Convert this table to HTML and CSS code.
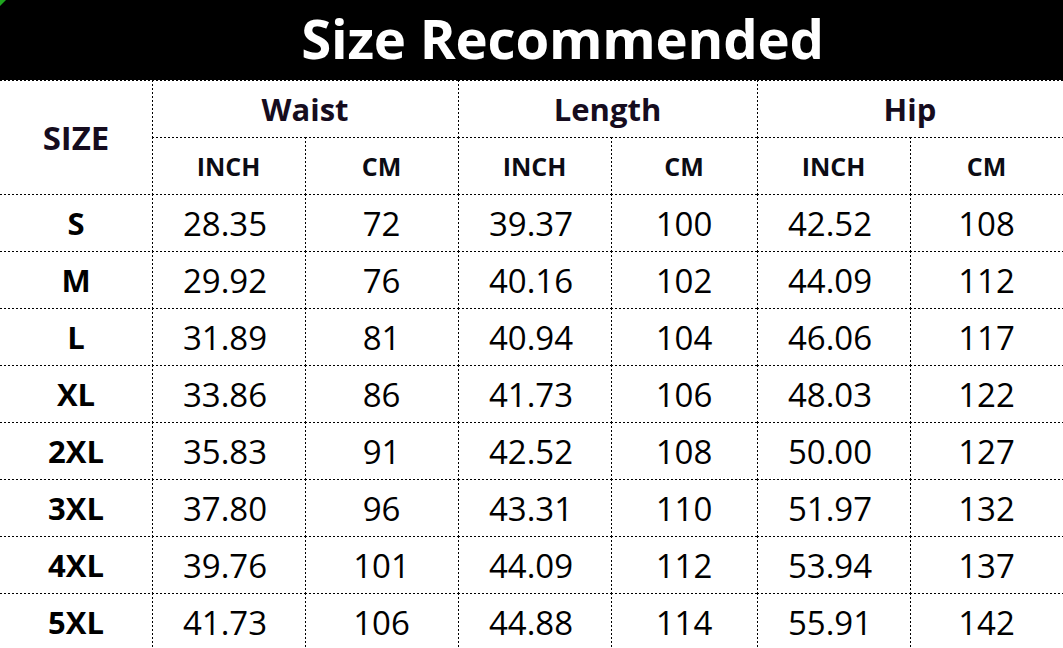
FILE: index.html
```html
<!DOCTYPE html>
<html>
<head>
<meta charset="utf-8">
<link rel="stylesheet" href="styles.css">
</head>
<body>
<div class="title"><span class="corner"></span><h1>Size Recommended</h1></div>
<div class="grid">
  <div class="c first head size">SIZE</div>
  <div class="c head group span2">Waist</div>
  <div class="c head group span2">Length</div>
  <div class="c head group span2">Hip</div>
  <div class="c unit">INCH</div><div class="c unit">CM</div>
  <div class="c unit">INCH</div><div class="c unit">CM</div>
  <div class="c unit">INCH</div><div class="c unit">CM</div>

  <div class="c first lbl">S</div><div class="c in">28.35</div><div class="c">72</div><div class="c in">39.37</div><div class="c">100</div><div class="c in">42.52</div><div class="c">108</div>
  <div class="c first lbl">M</div><div class="c in">29.92</div><div class="c">76</div><div class="c in">40.16</div><div class="c">102</div><div class="c in">44.09</div><div class="c">112</div>
  <div class="c first lbl">L</div><div class="c in">31.89</div><div class="c">81</div><div class="c in">40.94</div><div class="c">104</div><div class="c in">46.06</div><div class="c">117</div>
  <div class="c first lbl">XL</div><div class="c in">33.86</div><div class="c">86</div><div class="c in">41.73</div><div class="c">106</div><div class="c in">48.03</div><div class="c">122</div>
  <div class="c first lbl">2XL</div><div class="c in">35.83</div><div class="c">91</div><div class="c in">42.52</div><div class="c">108</div><div class="c in">50.00</div><div class="c">127</div>
  <div class="c first lbl">3XL</div><div class="c in">37.80</div><div class="c">96</div><div class="c in">43.31</div><div class="c">110</div><div class="c in">51.97</div><div class="c">132</div>
  <div class="c first lbl">4XL</div><div class="c in">39.76</div><div class="c">101</div><div class="c in">44.09</div><div class="c">112</div><div class="c in">53.94</div><div class="c">137</div>
  <div class="c first lbl">5XL</div><div class="c in">41.73</div><div class="c">106</div><div class="c in">44.88</div><div class="c">114</div><div class="c in">55.91</div><div class="c">142</div>
</div>
</body>
</html>
```
FILE: styles.css
```css
html, body {
  margin: 0;
  padding: 0;
  background: #fff;
  overflow: hidden;
}
body {
  font-family: "Open Sans", "Noto Sans", sans-serif;
  color: #000;
}
.title {
  position: relative;
  height: 80px;
  background: #000;
  display: flex;
  align-items: center;
  justify-content: center;
  padding-left: 62px;
}
.corner {
  position: absolute;
  left: 0;
  top: 0;
  width: 0;
  height: 0;
  border-top: 6px solid #1fa51f;
  border-right: 6px solid transparent;
}
.title h1 {
  margin: 0;
  color: #fff;
  font-size: 54.5px;
  font-weight: 700;
  letter-spacing: -0.2px;
  line-height: 1;
  padding-bottom: 4px;
}
.grid {
  display: grid;
  grid-template-columns: 152px 153px 153px 153px 146px 153px 153px;
  grid-auto-rows: 57px;
}
.c {
  display: flex;
  align-items: center;
  justify-content: center;
  font-size: 33px;
  font-weight: 400;
  padding-top: 1px;
  background-image:
    linear-gradient(to right, #000 50%, transparent 50%),
    linear-gradient(to bottom, #000 50%, transparent 50%);
  background-size: 4px 1px, 1px 4px;
  background-repeat: repeat-x, repeat-y;
  background-position: 0 0, 0 0;
}
.c.in {
  padding-right: 7px;
}
.c.first {
  background-image: linear-gradient(to right, #000 50%, transparent 50%);
  background-size: 4px 1px;
  background-repeat: repeat-x;
}
.size {
  grid-row: span 2;
}
.span2 {
  grid-column: span 2;
}
.head {
  font-weight: 700;
  font-size: 31px;
  color: #160c1e;
}
.head.size {
  font-size: 33px;
}
.unit {
  font-weight: 700;
  font-size: 25px;
  color: #0c0c14;
}
.lbl {
  font-weight: 700;
  font-size: 31px;
}
```
